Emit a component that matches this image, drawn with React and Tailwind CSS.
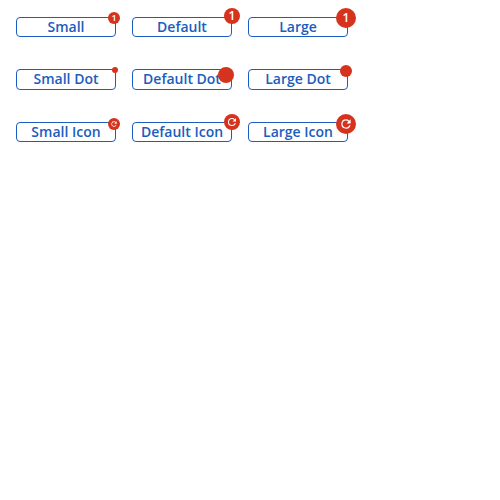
import React from 'react';

const RefreshIcon = ({ className }) => (
  <svg viewBox="0 0 24 24" fill="currentColor" className={className}>
    <path d="M17.65 6.35A7.958 7.958 0 0 0 12 4a8 8 0 1 0 7.73 10h-2.08A5.99 5.99 0 1 1 12 6c1.66 0 3.14.69 4.22 1.78L13 11h7V4l-2.35 2.35z" />
  </svg>
);

const rows = [
  {
    height: 'h-5',
    items: [
      { label: 'Small', badge: '-top-[5px] left-[92px] size-3 text-[9px] leading-3', content: '1' },
      { label: 'Default', badge: '-top-[9px] left-[92px] size-4 text-[12px] leading-4', content: '1' },
      { label: 'Large', badge: '-top-[9px] left-[88px] size-5 text-[12px] leading-5', content: '1' },
    ],
  },
  {
    height: 'h-[21px] pb-px',
    items: [
      { label: 'Small Dot', badge: '-top-[2px] left-[96px] size-1.5' },
      { label: 'Default Dot', badge: '-top-[2px] left-[86px] size-4' },
      { label: 'Large Dot', badge: '-top-[4px] left-[92px] size-3' },
    ],
  },
  {
    height: 'h-5',
    items: [
      { label: 'Small Icon', badge: '-top-[4px] left-[92px] size-3', content: <RefreshIcon className="size-2" /> },
      { label: 'Default Icon', badge: '-top-[8px] left-[92px] size-4', content: <RefreshIcon className="size-3" /> },
      { label: 'Large Icon', badge: '-top-[8px] left-[88px] size-5', content: <RefreshIcon className="size-3.5" /> },
    ],
  },
];

export default function App() {
  return (
    <main className="flex min-h-screen flex-col gap-8 bg-white px-4 pt-[17px] font-['Open_Sans',sans-serif] font-semibold">
      {rows.map((row, i) => (
        <div key={i} className="flex gap-4">
          {row.items.map(({ label, badge, content }) => (
            <div key={label} className="relative w-[100px]">
              <button
                type="button"
                className={`${row.height} flex w-full items-center justify-center rounded-[4px] border border-[#1b5dbe] bg-white text-[14px] leading-[18px] whitespace-nowrap text-[#1b5dbe]`}
              >
                {label}
              </button>
              <span className={`absolute flex items-center justify-center rounded-full bg-[#d6331f] text-white ${badge}`}>
                {content}
              </span>
            </div>
          ))}
        </div>
      ))}
    </main>
  );
}
